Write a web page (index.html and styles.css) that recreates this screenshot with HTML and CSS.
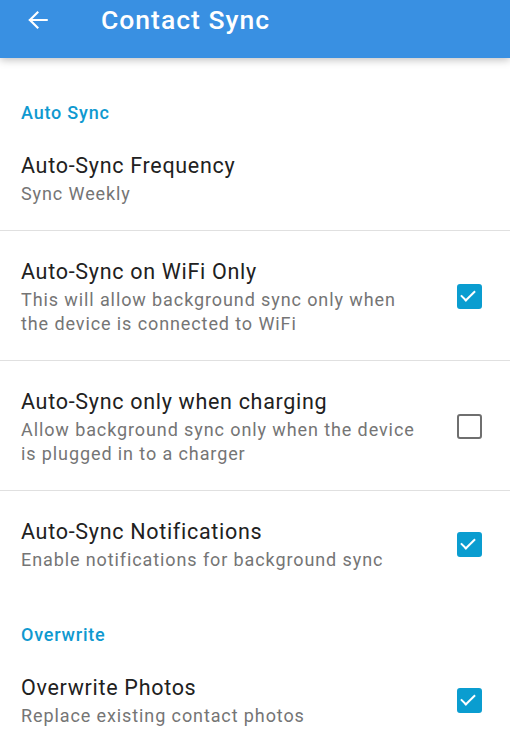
FILE: index.html
```html
<!DOCTYPE html>
<html lang="en">
  <head>
    <meta charset="UTF-8" />
    <meta name="viewport" content="width=device-width, initial-scale=1.0" />
    <title>Contact Sync</title>
    <link rel="stylesheet" href="styles.css">
  </head>
  <body>
    <div class="toolbar">
      <button class="back-button" title="Back">
        <svg width="26" height="26" viewBox="0 0 24 24">
          <path d="M20 12H4.5M11.5 5L4.5 12l7 7" fill="none" stroke="#fff" stroke-width="2" stroke-linecap="square" />
        </svg>
      </button>
      <h1 class="toolbar-title">Contact Sync</h1>
    </div>

    <div class="settings">
      <div class="category first">Auto Sync</div>

      <div class="pref">
        <div class="pref-text">
          <div class="pref-title">Auto-Sync Frequency</div>
          <div class="pref-summary">Sync Weekly</div>
        </div>
      </div>

      <div class="pref">
        <div class="pref-text">
          <div class="pref-title">Auto-Sync on WiFi Only</div>
          <div class="pref-summary">This will allow background sync only when the device is connected to WiFi</div>
        </div>
        <span class="checkbox checked"></span>
      </div>

      <div class="pref">
        <div class="pref-text">
          <div class="pref-title">Auto-Sync only when charging</div>
          <div class="pref-summary">Allow background sync only when the device is plugged in to a charger</div>
        </div>
        <span class="checkbox"></span>
      </div>

      <div class="pref last">
        <div class="pref-text">
          <div class="pref-title">Auto-Sync Notifications</div>
          <div class="pref-summary">Enable notifications for background sync</div>
        </div>
        <span class="checkbox checked"></span>
      </div>

      <div class="category">Overwrite</div>

      <div class="pref last">
        <div class="pref-text">
          <div class="pref-title">Overwrite Photos</div>
          <div class="pref-summary">Replace existing contact photos</div>
        </div>
        <span class="checkbox checked"></span>
      </div>
    </div>
  </body>
</html>
```

FILE: styles.css
```css
body {
  font-family: Roboto, "Noto Sans", sans-serif;
  margin: 0;
  padding: 0;
  width: 510px;
  height: 753px;
  overflow: hidden;
  background: #fff;
  color: #212121;
}
.toolbar {
  height: 58px;
  background: #3990e2;
  display: flex;
  align-items: flex-start;
  padding-top: 4px;
  box-sizing: border-box;
  box-shadow: 0 2px 8px rgba(0, 0, 0, 0.25);
  position: relative;
  z-index: 1;
}
.back-button {
  background: none;
  border: none;
  padding: 0;
  margin: 3px 0 0 25px;
  width: 26px;
  height: 26px;
  cursor: pointer;
}
.toolbar-title {
  margin: 0 0 0 50px;
  font-size: 26.5px;
  font-weight: 500;
  line-height: 32px;
  letter-spacing: 1px;
  color: #fff;
}
.settings {
  display: flex;
  flex-direction: column;
}
.category {
  padding: 27px 21px 0;
  font-size: 18px;
  font-weight: 500;
  line-height: 24px;
  letter-spacing: 0.8px;
  color: #0f99d0;
}
.category.first {
  padding-top: 43px;
}
.pref {
  display: flex;
  align-items: center;
  padding: 26px 28px 24px 21px;
  border-bottom: 1px solid #e0e0e0;
}
.pref.last {
  border-bottom: none;
}
.pref-text {
  flex: 1;
  padding-right: 30px;
}
.pref-title {
  font-size: 21.5px;
  line-height: 30px;
  letter-spacing: 0.7px;
  margin-bottom: 1px;
  color: #212121;
}
.pref-summary {
  font-size: 18px;
  line-height: 24px;
  letter-spacing: 0.9px;
  color: #757575;
}
.checkbox {
  width: 25px;
  height: 25px;
  box-sizing: border-box;
  border: 2.5px solid #6f6f6f;
  border-radius: 3px;
  flex-shrink: 0;
  position: relative;
}
.checkbox.checked {
  background: #0a9dd0;
  border-color: #0a9dd0;
}
.checkbox.checked::after {
  content: "";
  position: absolute;
  left: 5px;
  top: 1px;
  width: 6px;
  height: 12px;
  border: solid #fff;
  border-width: 0 2.5px 2.5px 0;
  transform: rotate(45deg);
}
```
